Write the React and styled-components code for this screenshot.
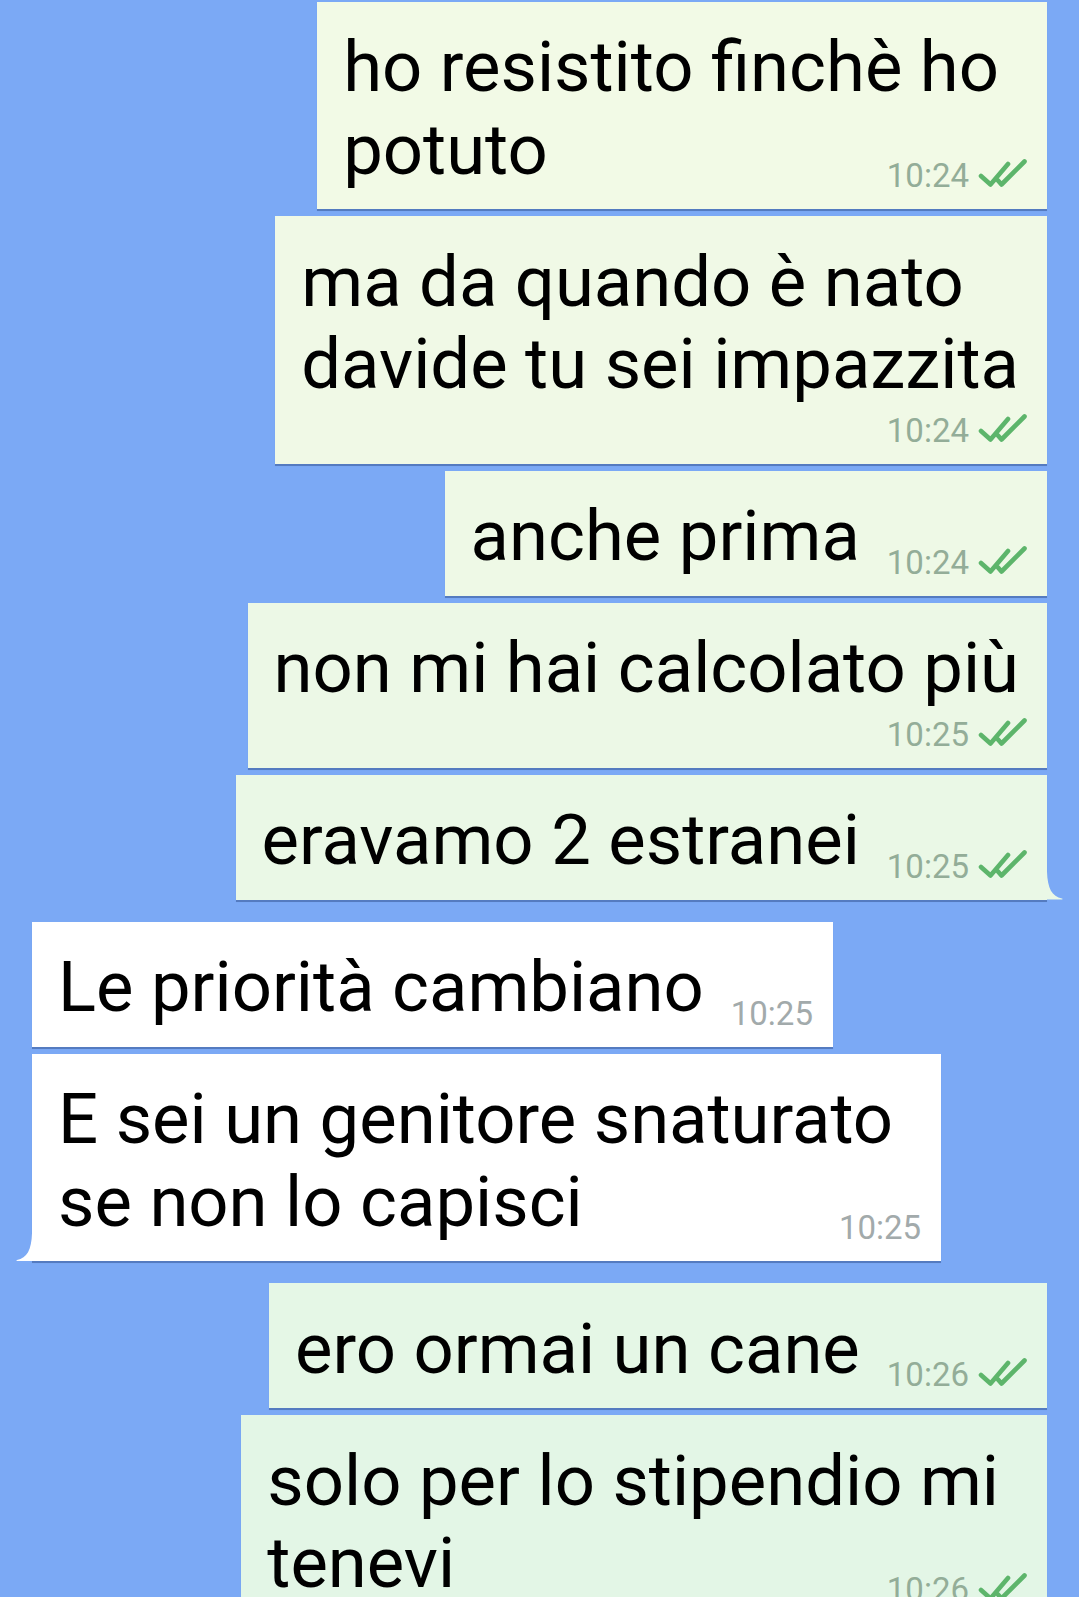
import React from 'react';
import styled, { createGlobalStyle, css } from 'styled-components';

const GlobalStyle = createGlobalStyle`
  html, body {
    margin: 0;
    padding: 0;
    background: #7ba9f5;
  }
  body {
    font-family: Roboto, "Noto Sans", "Liberation Sans", sans-serif;
  }
`;

const ChatScreen = styled.div`
  display: flex;
  flex-direction: column;
  height: 1597px;
  padding: 1.5px 32px 0;
  box-sizing: border-box;
  overflow: hidden;
  background: #7ba9f5;
`;

const Bubble = styled.div`
  position: relative;
  display: flex;
  flex-direction: column;
  flex-shrink: 0;
  align-self: ${props => (props.$out ? 'flex-end' : 'flex-start')};
  margin-top: ${props => (props.$first ? '0' : props.$groupStart ? '22px' : '7px')};
  padding: 24.5px 20px 18px 26px;
  background: ${props => props.$bg};
  box-shadow: 0 1.5px 0.5px rgba(38, 66, 128, 0.45);
  color: #000;

  ${props =>
    props.$tail &&
    css`
      &::after {
        content: '';
        position: absolute;
        bottom: 0;
        width: 16px;
        height: 28px;
        background: ${props.$bg};
        ${props.$out
          ? css`
              right: -16px;
              clip-path: path('M0 0 C0.5 17 5 25 15 27 Q16.5 27.6 15 28 L0 28 Z');
            `
          : css`
              left: -16px;
              clip-path: path('M16 0 C15.5 17 11 25 1 27 Q-0.5 27.6 1 28 L16 28 Z');
            `}
      }
    `}
`;

/* a wrapped message keeps a wider right margin, as the phone does */
const TextLine = styled.div`
  display: flex;
  align-items: flex-end;
  padding-right: ${props => (props.$hasMeta ? '0' : props.$wrapped ? '28px' : '8px')};
  font-size: 70.6px;
  line-height: 82.5px;
  white-space: nowrap;
`;

const Words = styled.span`
  flex: 0 0 auto;
`;

const MetaRow = styled.div`
  display: flex;
  justify-content: flex-end;
  align-items: flex-end;
  height: 40px;
`;

const Meta = styled.span`
  display: inline-flex;
  align-items: baseline;
  gap: 9px;
  margin-left: ${props => (props.$inline ? 'auto' : '0')};
  padding-left: ${props => (props.$inline ? '27px' : '0')};
  font-size: 33px;
  line-height: 30px;
  color: ${props => (props.$out ? '#93ad98' : '#a2aaab')};
`;

const Ticks = styled.svg`
  display: block;
  flex-shrink: 0;
  width: 49px;
  height: 28px;
`;

const DoubleTick = () => (
  <Ticks viewBox="0 0 49 28" fill="none" stroke="#5db56b" strokeWidth="4.6" strokeLinecap="round" strokeLinejoin="round">
    <path d="M3 17 L12.5 25.5 L30 5" />
    <path d="M20 21.5 L23.5 25.5 L46.5 2.5" />
  </Ticks>
);

const messages = [
  { out: true, lines: ['ho resistito finchè ho', 'potuto'], time: '10:24', bg: '#f2fae6' },
  { out: true, lines: ['ma da quando è nato', 'davide tu sei impazzita'], time: '10:24', ownRow: true, bg: '#f0f9e6' },
  { out: true, lines: ['anche prima'], time: '10:24', bg: '#eef9e6' },
  { out: true, lines: ['non mi hai calcolato più'], time: '10:25', ownRow: true, bg: '#ecf8e6' },
  { out: true, lines: ['eravamo 2 estranei'], time: '10:25', tail: true, bg: '#eaf8e6' },
  { out: false, lines: ['Le priorità cambiano'], time: '10:25', groupStart: true, bg: '#ffffff' },
  { out: false, lines: ['E sei un genitore snaturato', 'se non lo capisci'], time: '10:25', tail: true, bg: '#ffffff' },
  { out: true, lines: ['ero ormai un cane'], time: '10:26', groupStart: true, bg: '#e5f7e6' },
  { out: true, lines: ['solo per lo stipendio mi', 'tenevi'], time: '10:26', tail: true, bg: '#e3f6e6' }
];

const MessageMeta = ({ out, time, inline }) => (
  <Meta $out={out} $inline={inline}>
    {time}
    {out && <DoubleTick />}
  </Meta>
);

const Message = ({ msg, first }) => {
  const { out, lines, time, ownRow, tail, groupStart, bg } = msg;
  const last = lines.length - 1;
  const wrapped = lines.length > 1 && !ownRow;
  return (
    <Bubble $out={out} $first={first} $groupStart={groupStart} $tail={tail} $bg={bg}>
      {lines.map((line, i) => {
        const withMeta = i === last && !ownRow;
        return (
          <TextLine key={i} $hasMeta={withMeta} $wrapped={wrapped}>
            <Words>{line}</Words>
            {withMeta && <MessageMeta out={out} time={time} inline />}
          </TextLine>
        );
      })}
      {ownRow && (
        <MetaRow>
          <MessageMeta out={out} time={time} />
        </MetaRow>
      )}
    </Bubble>
  );
};

const App = () => (
  <>
    <GlobalStyle />
    <ChatScreen>
      {messages.map((msg, i) => (
        <Message key={i} msg={msg} first={i === 0} />
      ))}
    </ChatScreen>
  </>
);

export default App;
